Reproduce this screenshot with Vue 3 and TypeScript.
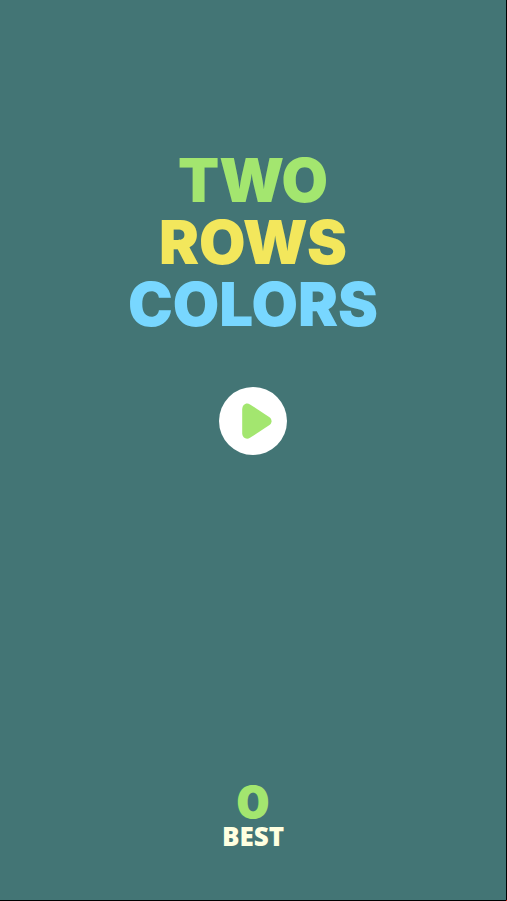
<script setup lang="ts">
interface TitleLine {
  text: string
  tone: string
}

const title: TitleLine[] = [
  { text: 'TWO', tone: 'green' },
  { text: 'ROWS', tone: 'yellow' },
  { text: 'COLORS', tone: 'blue' },
]

const best: number = 0
</script>

<template>
  <main class="screen">
    <h1 class="title">
      <span v-for="line in title" :key="line.text" :class="line.tone">{{ line.text }}</span>
    </h1>
    <button class="play" type="button" aria-label="Play">
      <svg viewBox="0 0 68 68" aria-hidden="true">
        <path
          d="M23.2 22.5V46C23.2 50.8 27.4 53 31 50.8L50.5 38.1C53.2 36.1 53.2 32.3 50.5 30.3L31 17.4C27.4 15.1 23.2 17.6 23.2 22.5Z"
        />
      </svg>
    </button>
    <section class="score">
      <output class="value green">{{ best }}</output>
      <span class="label">BEST</span>
    </section>
  </main>
</template>

<style>
body {
  margin: 0;
  background: #437575;
}
</style>

<style scoped>
.screen {
  box-sizing: border-box;
  position: relative;
  min-height: 100vh;
  padding: 149px 0 51px;
  display: flex;
  flex-direction: column;
  align-items: center;
  background: #437575;
  border-right: 1px solid #000;
  border-bottom: 1px solid #000;
}

.screen::after {
  content: "";
  position: absolute;
  right: -1px;
  bottom: -1px;
  width: 1px;
  height: 1px;
  background: #c22;
}

.title {
  margin: 0;
  display: flex;
  flex-direction: column;
  align-items: center;
  font: 900 60px/62px Inter, sans-serif;
}

.green {
  color: #a3e66f;
}

.yellow {
  color: #f3e75c;
}

.blue {
  color: #78d7ff;
}

.play {
  width: 68px;
  height: 68px;
  margin: 52px 0 48px;
  padding: 0;
  border: 0;
  border-radius: 50%;
  background: #fff;
  cursor: pointer;
}

.play svg {
  display: block;
  width: 100%;
  height: 100%;
  fill: #a3e66f;
}

.score {
  margin-top: auto;
  display: flex;
  flex-direction: column;
  align-items: center;
}

.value {
  font: 900 47px/42px Inter, sans-serif;
}

.label {
  font: 900 26px/26px "Noto Sans", sans-serif;
  color: #ffffe0;
}
</style>
